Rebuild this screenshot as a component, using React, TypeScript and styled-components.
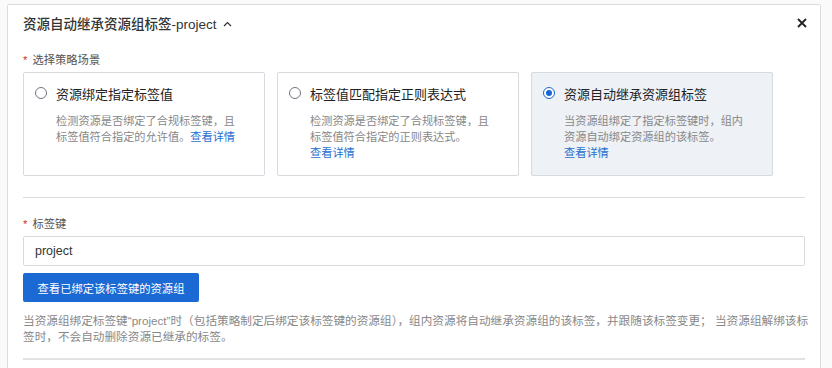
import React, { useState } from 'react';
import styled, { createGlobalStyle } from 'styled-components';

const GlobalStyle = createGlobalStyle`
  html, body {
    margin: 0;
    padding: 0;
    background: #fafafa;
    font-family: "Liberation Sans", "Noto Sans CJK SC", sans-serif;
    color: #333;
  }
`;

interface Scene {
  id: string;
  title: string;
  desc: string;
  linkBreak: boolean;
}

const scenes: Scene[] = [
  {
    id: 'bind',
    title: '资源绑定指定标签值',
    desc: '检测资源是否绑定了合规标签键，且标签值符合指定的允许值。',
    linkBreak: false,
  },
  {
    id: 'regex',
    title: '标签值匹配指定正则表达式',
    desc: '检测资源是否绑定了合规标签键，且标签值符合指定的正则表达式。',
    linkBreak: true,
  },
  {
    id: 'inherit',
    title: '资源自动继承资源组标签',
    desc: '当资源组绑定了指定标签键时，组内资源自动绑定资源组的该标签。',
    linkBreak: true,
  },
];

export default function App() {
  const [selected, setSelected] = useState('inherit');
  const [tagKey, setTagKey] = useState('project');

  return (
    <>
      <GlobalStyle />
      <Panel>
        <Header>
          <Title>
            资源自动继承资源组标签-project
            <svg width="9" height="6" viewBox="0 0 9 6">
              <polyline points="1,5 4.5,1.5 8,5" fill="none" stroke="#333" strokeWidth="1.2" />
            </svg>
          </Title>
          <CloseButton aria-label="close">
            <svg width="10" height="10" viewBox="0 0 10 10">
              <path d="M1 1 L9 9 M9 1 L1 9" stroke="#222" strokeWidth="1.8" />
            </svg>
          </CloseButton>
        </Header>

        <Body>
          <Label>
            <Star>*</Star>选择策略场景
          </Label>
          <Cards>
            {scenes.map((s) => (
              <Card key={s.id} $active={selected === s.id} onClick={() => setSelected(s.id)}>
                <CardHead>
                  <Radio $checked={selected === s.id} />
                  <CardTitle>{s.title}</CardTitle>
                </CardHead>
                <CardDesc>
                  {s.desc}
                  {s.linkBreak && <br />}
                  <Link>查看详情</Link>
                </CardDesc>
              </Card>
            ))}
          </Cards>

          <Divider />

          <Label>
            <Star>*</Star>标签键
          </Label>
          <Input value={tagKey} onChange={(e) => setTagKey(e.target.value)} />
          <PrimaryButton>查看已绑定该标签键的资源组</PrimaryButton>
          <Help>
            当资源组绑定标签键“project”时（包括策略制定后绑定该标签键的资源组），组内资源将自动继承资源组的该标签，并跟随该标签变更；
            当资源组解绑该标
            <br />
            签时，不会自动删除资源已继承的标签。
          </Help>
          <BottomDivider />
        </Body>
      </Panel>
    </>
  );
}

const Panel = styled.div`
  margin: 4px 0 0 7px;
  width: 814px;
  height: 400px;
  background: #fff;
  border: 1px solid #dcdcdc;
  border-radius: 2px;
  box-sizing: border-box;
`;

const Header = styled.div`
  display: flex;
  align-items: center;
  justify-content: space-between;
  height: 34px;
  padding: 1px 13px 0 15px;
`;

const Title = styled.div`
  display: flex;
  align-items: center;
  gap: 6px;
  font-size: 13.5px;
  font-weight: 500;
  color: #333;

  svg {
    margin-top: 1px;
  }
`;

const CloseButton = styled.button`
  border: none;
  background: none;
  padding: 0;
  display: flex;
  cursor: pointer;
`;

const Body = styled.div`
  padding: 12px 15px 0 15px;
  display: flex;
  flex-direction: column;
  align-items: flex-start;
`;

const Label = styled.div`
  font-size: 11.3px;
  line-height: 16px;
  color: #555;
  margin-bottom: 4px;
`;

const Star = styled.span`
  color: #d93026;
  margin-right: 5px;
`;

const Cards = styled.div`
  display: flex;
  gap: 12px;
`;

const Card = styled.div<{ $active: boolean }>`
  width: 242px;
  height: 104px;
  box-sizing: border-box;
  padding: 13px 12px 0 11px;
  border: 1px solid #d7dbe0;
  border-radius: 2px;
  background: ${(p) => (p.$active ? '#eef1f6' : '#fff')};
  cursor: pointer;
`;

const CardHead = styled.div`
  display: flex;
  align-items: center;
  gap: 9px;
  height: 14px;
`;

const Radio = styled.span<{ $checked: boolean }>`
  width: 12px;
  height: 12px;
  flex: none;
  box-sizing: border-box;
  border-radius: 50%;
  border: 1px solid ${(p) => (p.$checked ? '#1a66d2' : '#6f7480')};
  background: #fff;
  display: flex;
  align-items: center;
  justify-content: center;

  &::after {
    content: '';
    display: ${(p) => (p.$checked ? 'block' : 'none')};
    width: 6px;
    height: 6px;
    border-radius: 50%;
    background: #1a66d2;
  }
`;

const CardTitle = styled.span`
  font-size: 13px;
  color: #222;
  white-space: nowrap;
`;

const CardDesc = styled.div`
  margin: 13px 0 0 21px;
  width: 182px;
  font-size: 11.2px;
  line-height: 16px;
  color: #888;
`;

const Link = styled.a`
  color: #1f6fd1;
  cursor: pointer;
`;

const Divider = styled.div`
  align-self: stretch;
  height: 1px;
  background: #dcdcdc;
  margin: 21px 0 18px;
`;

const Input = styled.input`
  align-self: stretch;
  height: 30px;
  box-sizing: border-box;
  border: 1px solid #d7dbe0;
  border-radius: 2px;
  padding: 0 11px;
  font-family: inherit;
  font-size: 12.5px;
  color: #333;
  outline: none;
`;

const PrimaryButton = styled.button`
  margin-top: 7px;
  width: 176px;
  height: 29px;
  border: none;
  border-radius: 2px;
  background: #1b6ad3;
  color: #fff;
  font-family: inherit;
  font-size: 11.3px;
  cursor: pointer;
`;

const Help = styled.div`
  margin-top: 11px;
  font-size: 11.65px;
  line-height: 16px;
  color: #888;
  white-space: nowrap;
`;

const BottomDivider = styled.div`
  align-self: stretch;
  height: 2px;
  background: #e2e2e2;
  margin-top: 13px;
`;
